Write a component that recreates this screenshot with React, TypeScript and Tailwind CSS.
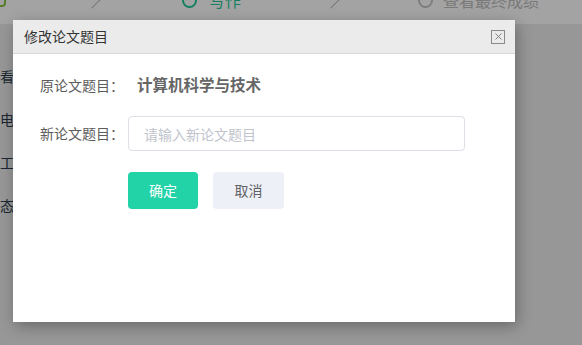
import { X } from "lucide-react";

const font = { fontFamily: '"Noto Sans CJK SC", "Noto Sans", sans-serif' };

const navItems = ["查看", "用电", "施工", "状态"];

function StepBar() {
  return (
    <div className="h-[24px] overflow-hidden bg-white">
      <div className="-mt-[12px] flex h-[24px] items-center text-[16px]">
        <div className="ml-[-6px] h-[14px] w-[12px] rounded-sm border-2 border-[#8bc34a]" />
        <div className="ml-[80px] h-[12px] w-[12px] rotate-45 border-r border-t border-[#bbb]" />
        <div className="ml-[84px] h-[15px] w-[15px] rounded-full border-2 border-[#1ec99a]" />
        <span className="ml-[12px] text-[#1ec99a]">写作</span>
        <div className="ml-[84px] h-[12px] w-[12px] rotate-45 border-r border-t border-[#bbb]" />
        <div className="ml-[81px] h-[15px] w-[15px] rounded-full border-2 border-[#c4c4c4]" />
        <span className="ml-[10px] text-[#bdbdbd]">查看最终成绩</span>
      </div>
    </div>
  );
}

export default function App() {
  return (
    <div className="relative h-[345px] w-[582px] overflow-hidden bg-[#ececec]" style={font}>
      {/* page underneath */}
      <StepBar />
      <div className="mt-[42px] flex w-[14px] flex-col gap-[23px] overflow-hidden">
        {navItems.map((item) => (
          <div key={item} className="flex h-[20px] justify-end whitespace-nowrap text-[14px] text-[#2c3e50]">
            {item}
          </div>
        ))}
      </div>

      {/* mask */}
      <div className="absolute inset-0 bg-black/[0.36]" />

      {/* dialog */}
      <div className="absolute left-[13px] top-[20px] flex h-[302px] w-[502px] flex-col bg-white shadow-[2px_4px_14px_rgba(0,0,0,0.3)]">
        <div className="flex h-[34px] items-center justify-between border-b border-[#d8d8d8] bg-[#ebebeb] pl-[11px] pr-[10px]">
          <span className="text-[14px] text-[#333]">修改论文题目</span>
          <div className="flex h-[14px] w-[14px] items-center justify-center border border-[#8a8a8a]">
            <X size={11} strokeWidth={2} className="text-[#777]" />
          </div>
        </div>

        <div className="flex flex-col pl-[27px] pt-[20px]">
          <div className="flex h-[22px] items-center">
            <span className="w-[88px] text-[14px] text-[#5c5c5c]">原论文题目：</span>
            <span className="ml-[9px] text-[15.5px] font-bold text-[#666]">计算机科学与技术</span>
          </div>

          <div className="mt-[20px] flex items-center">
            <span className="w-[88px] text-[14px] text-[#5c5c5c]">新论文题目：</span>
            <input
              className="h-[35px] w-[337px] rounded-[4px] border border-[#dcdfe6] px-[15px] text-[14px] text-[#606266] outline-none placeholder:text-[#c0c4cc]"
              placeholder="请输入新论文题目"
            />
          </div>

          <div className="mt-[21px] flex gap-[15px] pl-[88px]">
            <button className="h-[37px] w-[70px] rounded-[4px] bg-[#22d3a8] text-[14px] text-white">确定</button>
            <button className="h-[37px] w-[71px] rounded-[4px] bg-[#eef0f7] text-[14px] text-[#606266]">取消</button>
          </div>
        </div>
      </div>
    </div>
  );
}
